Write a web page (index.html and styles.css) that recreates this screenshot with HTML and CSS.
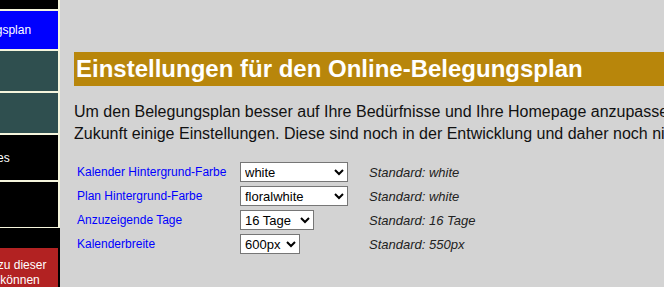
FILE: index.html
```html
<!DOCTYPE html>
<html lang="de">
<head>
    <meta charset="UTF-8">
    <meta name="viewport" content="width=device-width, initial-scale=1.0">
    <title>Einstellungen Online-Belegungsplan</title>
    <link rel="stylesheet" href="styles.css">
</head>
<body>

<div class="page">
    <aside class="sidebar">
        <div class="sidebar-inner">
            <nav class="menu">
                <div class="nav-item stub"></div>
                <a class="nav-item active" href="#">Der Belegungsplan</a>
                <a class="nav-item slate" href="#">Preise</a>
                <a class="nav-item slate" href="#">Lage</a>
                <a class="nav-item black" href="#">Wissenswertes</a>
                <a class="nav-item black" href="#">Kontakt</a>
            </nav>
            <div class="notice">Änderungen zu dieser<br>speichern zu können</div>
        </div>
    </aside>

    <main class="content">
        <h1>Einstellungen für den Online-Belegungsplan</h1>
        <p class="intro">Um den Belegungsplan besser auf Ihre Bedürfnisse und Ihre Homepage anzupassen, bieten wir Ihnen ab sofort und in<br>
        Zukunft einige Einstellungen. Diese sind noch in der Entwicklung und daher noch nicht vollständig.</p>

        <table class="settings">
            <tr>
                <td class="label">Kalender Hintergrund-Farbe</td>
                <td class="field">
                    <select class="wide">
                        <option selected>white</option>
                        <option>floralwhite</option>
                        <option>ivory</option>
                        <option>beige</option>
                        <option>lavenderblush</option>
                    </select>
                </td>
                <td class="default">Standard: white</td>
            </tr>
            <tr>
                <td class="label">Plan Hintergrund-Farbe</td>
                <td class="field">
                    <select class="wide">
                        <option>white</option>
                        <option selected>floralwhite</option>
                        <option>ivory</option>
                        <option>beige</option>
                        <option>lavenderblush</option>
                    </select>
                </td>
                <td class="default">Standard: white</td>
            </tr>
            <tr>
                <td class="label">Anzuzeigende Tage</td>
                <td class="field">
                    <select class="days">
                        <option>8 Tage</option>
                        <option>12 Tage</option>
                        <option selected>16 Tage</option>
                        <option>20 Tage</option>
                    </select>
                </td>
                <td class="default">Standard: 16 Tage</td>
            </tr>
            <tr>
                <td class="label">Kalenderbreite</td>
                <td class="field">
                    <select class="px">
                        <option>500px</option>
                        <option>550px</option>
                        <option selected>600px</option>
                        <option>700px</option>
                    </select>
                </td>
                <td class="default">Standard: 550px</td>
            </tr>
        </table>
    </main>
</div>

</body>
</html>
```

FILE: styles.css
```css
body {
    margin: 0;
    overflow: hidden;
    background-color: lightgray;
    font-family: "Liberation Sans", Arial, sans-serif;
}
.page {
    display: flex;
    align-items: flex-start;
}
.sidebar {
    flex: none;
    width: 60px;
    min-height: 287px;
    background: #000;
    overflow: hidden;
}
.sidebar-inner {
    margin-left: -76px;
}
.menu {
    background: beige;
    padding: 0 2px 1px 0;
}
.nav-item {
    display: block;
    height: 38px;
    line-height: 38px;
    margin-bottom: 2px;
    padding: 0 5px;
    font-size: 12px;
    color: white;
    text-decoration: none;
    white-space: nowrap;
    background: #000;
}
.nav-item:last-child {
    margin-bottom: 0;
}
.nav-item.stub {
    height: 9px;
}
.nav-item.active {
    background: blue;
}
.nav-item.slate {
    height: 40px;
    line-height: 40px;
    background: darkslategray;
}
.nav-item.black {
    height: 45px;
    line-height: 46px;
}
.notice {
    margin: 20px 2px 0 0;
    padding: 10px 5px 20px;
    background: firebrick;
    color: white;
    font-size: 12px;
    line-height: 15px;
    white-space: nowrap;
}
.content {
    flex: none;
    width: 900px;
    padding-left: 14px;
}
h1 {
    margin: 52px 0 0;
    padding: 0 2px;
    background: darkgoldenrod;
    color: white;
    font-size: 24px;
    line-height: 34px;
}
.intro {
    margin: 15px 0 14px;
    font-size: 16px;
    line-height: 22px;
    color: #111;
}
.settings {
    border-spacing: 2px;
}
.settings td {
    padding: 1px;
    vertical-align: middle;
}
.label {
    width: 159px;
    font-size: 12px;
    color: blue;
}
.field {
    width: 125px;
}
.default {
    font-size: 13px;
    font-style: italic;
    color: #222;
}
select {
    height: 20px;
    border: 1px solid #767676;
    border-radius: 0;
    background: white;
    font-family: "Liberation Sans", Arial, sans-serif;
    font-size: 13px;
    color: #000;
}
select.wide {
    width: 108px;
}
select.days {
    width: 74px;
}
select.px {
    width: 60px;
}
```
